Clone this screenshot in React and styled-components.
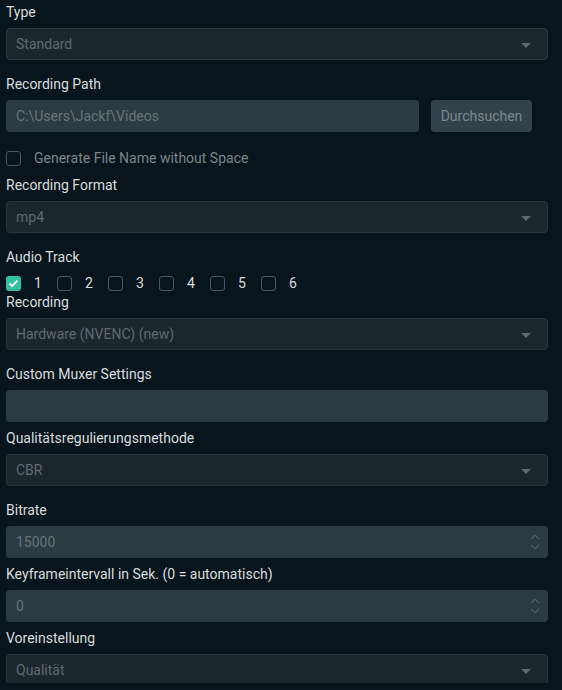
import React from 'react';
import styled, { createGlobalStyle } from 'styled-components';

const Global = createGlobalStyle`
    html, body {
        margin: 0;
        padding: 0;
        background: #09151c;
    }
    body {
        font-family: Roboto, "Liberation Sans", sans-serif;
        font-size: 14px;
        color: #d8dcde;
    }
`;

const Panel = styled.div`
    width: 562px;
    height: 683px;
    overflow: hidden;
    box-sizing: border-box;
    padding: 4px 14px 0 6px;
    background: #09151c;
`;

const Label = styled.div`
    height: 16px;
    line-height: 16px;
    color: #d8dcde;
    margin-bottom: 8px;
`;

const Field = styled.div`
    margin-bottom: ${p => p.gap}px;
`;

const SelectBox = styled.div`
    height: 32px;
    box-sizing: border-box;
    border: 1px solid #2a353c;
    border-radius: 4px;
    background: #1c262d;
    display: flex;
    align-items: center;
    justify-content: space-between;
    padding: 0 16px 0 9px;
    color: #5f6a71;
`;

const Caret = styled.span`
    width: 0;
    height: 0;
    border-left: 5px solid transparent;
    border-right: 5px solid transparent;
    border-top: 5px solid #5c676e;
    margin-top: 2px;
`;

const InputBox = styled.div`
    flex: 1;
    height: 32px;
    box-sizing: border-box;
    border-radius: 4px;
    background: #2c3a41;
    display: flex;
    align-items: center;
    justify-content: space-between;
    padding: 0 8px 0 10px;
    color: #69757b;
`;

const Row = styled.div`
    display: flex;
    align-items: center;
    gap: 12px;
    margin-right: ${p => (p.full ? 0 : 16)}px;
`;

const Button = styled.div`
    width: 101px;
    height: 32px;
    border-radius: 4px;
    background: #33424a;
    color: #7b878c;
    display: flex;
    align-items: center;
    justify-content: center;
`;

const CheckRow = styled.div`
    display: flex;
    align-items: center;
    height: 16px;
    margin-top: ${p => p.top || 0}px;
    margin-bottom: ${p => p.gap}px;
`;

const CheckItem = styled.label`
    display: flex;
    align-items: center;
    gap: 13px;
    width: ${p => (p.wide ? 'auto' : '51px')};
    color: ${p => (p.dim ? '#7a858b' : '#d8dcde')};
`;

const Box = styled.span`
    width: 15px;
    height: 15px;
    box-sizing: border-box;
    border-radius: 3px;
    border: ${p => (p.on ? 'none' : '1.5px solid #4a565c')};
    background: ${p => (p.on ? '#35bfa2' : 'transparent')};
    display: flex;
    align-items: center;
    justify-content: center;
`;

const Spin = styled.svg`
    display: block;
`;

function Select({ label, value, gap = 16 }) {
    return (
        <Field gap={gap}>
            <Label>{label}</Label>
            <SelectBox>
                <span>{value}</span>
                <Caret />
            </SelectBox>
        </Field>
    );
}

function Spinner() {
    return (
        <Spin width="10" height="20" viewBox="0 0 10 20">
            <path d="M1 7 L5 3 L9 7" fill="none" stroke="#4f5c63" strokeWidth="1.2" />
            <path d="M1 13 L5 17 L9 13" fill="none" stroke="#4f5c63" strokeWidth="1.2" />
        </Spin>
    );
}

function Check({ on }) {
    return (
        <Box on={on}>
            {on && (
                <svg width="11" height="9" viewBox="0 0 11 9">
                    <path d="M1.5 4.5 L4.2 7 L9.5 1.5" fill="none" stroke="#ffffff" strokeWidth="1.8" />
                </svg>
            )}
        </Box>
    );
}

export default function App() {
    return (
        <>
            <Global />
            <Panel>
                <Select label="Type" value="Standard" />

                <Field gap={18}>
                    <Label>Recording Path</Label>
                    <Row>
                        <InputBox>C:\Users\Jackf\Videos</InputBox>
                        <Button>Durchsuchen</Button>
                    </Row>
                </Field>

                <CheckRow gap={11}>
                    <CheckItem wide dim>
                        <Check />
                        Generate File Name without Space
                    </CheckItem>
                </CheckRow>

                <Select label="Recording Format" value="mp4" />

                <Label>Audio Track</Label>
                <CheckRow top={10} gap={3}>
                    {[1, 2, 3, 4, 5, 6].map(n => (
                        <CheckItem key={n}>
                            <Check on={n === 1} />
                            {n}
                        </CheckItem>
                    ))}
                </CheckRow>

                <Select label="Recording" value="Hardware (NVENC) (new)" />

                <Field gap={8}>
                    <Label>Custom Muxer Settings</Label>
                    <Row full>
                        <InputBox />
                    </Row>
                </Field>

                <Select label="Qualitätsregulierungsmethode" value="CBR" />

                <Field gap={8}>
                    <Label>Bitrate</Label>
                    <Row full>
                        <InputBox>
                            <span>15000</span>
                            <Spinner />
                        </InputBox>
                    </Row>
                </Field>

                <Field gap={8}>
                    <Label>Keyframeintervall in Sek. (0 = automatisch)</Label>
                    <Row full>
                        <InputBox>
                            <span>0</span>
                            <Spinner />
                        </InputBox>
                    </Row>
                </Field>

                <Select label="Voreinstellung" value="Qualität" />
            </Panel>
        </>
    );
}
